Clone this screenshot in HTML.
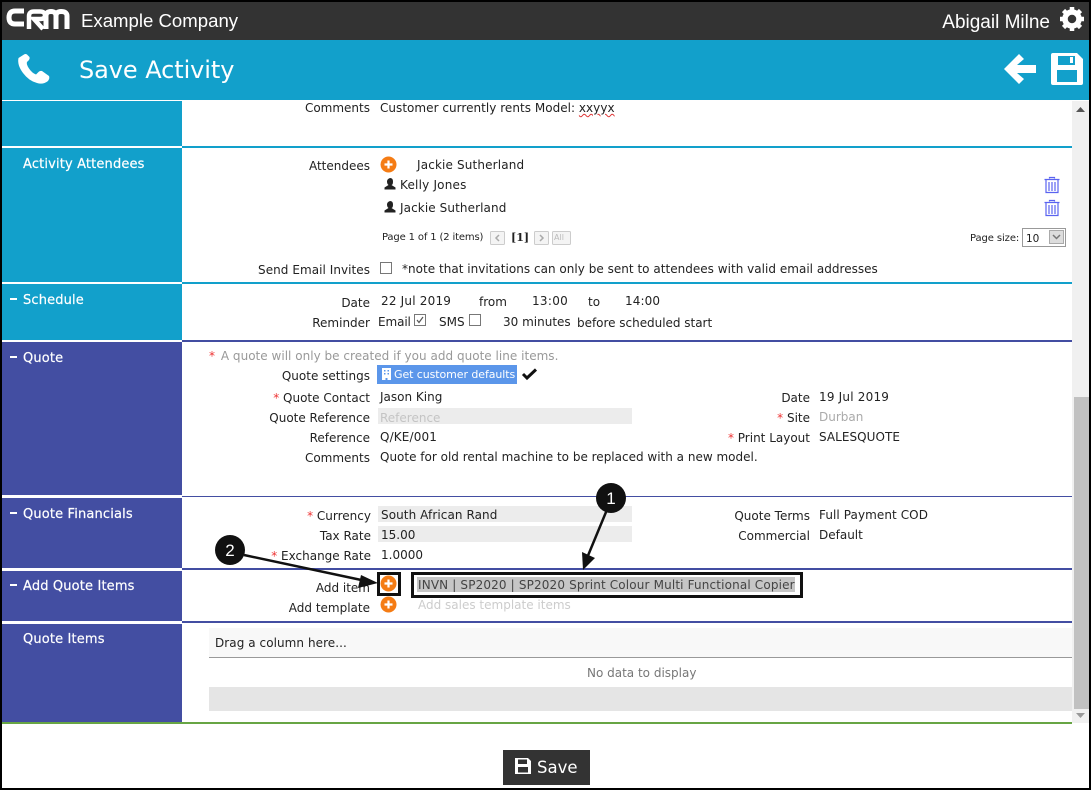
<!DOCTYPE html>
<html><head><meta charset="utf-8"><style>
html,body{margin:0;padding:0;background:#fff}
#p{position:relative;width:1091px;height:790px;overflow:hidden;background:#fff;font-family:"DejaVu Sans",Verdana,sans-serif;font-size:12px;color:#222}
#p div,#p span.a{position:absolute}
.t{position:absolute;line-height:16px;white-space:nowrap;font-size:12px;letter-spacing:0;margin-top:1px}
.r{position:absolute;line-height:16px;white-space:nowrap;text-align:right;font-size:12px;letter-spacing:0;margin-top:1px}
.s{color:#fff;font-size:13px;letter-spacing:.15px;left:23px;-webkit-text-stroke:.2px #fff;margin-top:2px}
.g{background:#ececec;height:16px}
i{font-style:normal;color:#e33}
svg{position:absolute;overflow:visible}
</style></head><body><div id="p">
<div style="left:0;top:2px;width:1091px;height:38px;background:#333"></div>
<div style="left:0;top:40px;width:1091px;height:60px;background:#12a0cb"></div>

<svg style="left:7px;top:8px" width="64" height="24" viewBox="0 0 64 24"><path d="M17 3H8Q2 3 2 9.500Q2 16 8 16H17" fill="none" stroke="#fff" stroke-width="5"/><path d="M22 21V8Q22 3.500 27 3.500H33Q38 3.500 38 7.500Q38 11 33 11H27L36 21" fill="none" stroke="#fff" stroke-width="4.500"/><path d="M39 21V8Q39 3.500 44 3.500Q49 3.500 49 8V21M49 8Q49 3.500 54 3.500Q60 3.500 60 8V21" fill="none" stroke="#fff" stroke-width="5"/></svg>
<span class="t" style="left:81px;top:9px;font-family:'Liberation Sans',sans-serif;font-size:18.600px;line-height:22px;color:#fff">Example Company</span>
<span class="t" style="right:41px;top:11px;font-family:'Liberation Sans',sans-serif;font-size:19px;line-height:22px;color:#fff">Abigail Milne</span>
<svg style="left:1059px;top:6px" width="26" height="26" viewBox="0 0 26 26"><circle cx="13" cy="13" r="7" fill="none" stroke="#fff" stroke-width="5.500"/><g stroke="#fff" stroke-width="4.500"><path d="M13 1V6M13 20V25M1 13H6M20 13H25M4.500 4.500L8 8M18 18L21.500 21.500M21.500 4.500L18 8M8 18L4.500 21.500"/></g></svg>

<svg style="left:17px;top:53px" width="33" height="32" viewBox="0 0 33 32"><path d="M7 1.500L1.500 5Q0 12 6 20T20 30Q26 32 31 28Q33 25 32 23L25 18Q23 17.500 21.500 19L19 21.500Q15 20 12 15.500T10 9L12 7Q13 5.500 12.500 4L10 1.500Q8.500 .5 7 1.500Z" fill="#fff"/></svg>
<span class="t" style="left:79px;top:54px;font-size:24px;line-height:30px;color:#fff;letter-spacing:-.07px">Save Activity</span>
<svg style="left:1003px;top:53px" width="33" height="32" viewBox="0 0 33 32"><path d="M1 16L16 1L21 6L14 12H33V20H14L21 26L16 31Z" fill="#fff"/></svg>
<svg style="left:1051px;top:53px" width="32" height="32" viewBox="0 0 32 32"><path fill-rule="evenodd" d="M2 0H26L32 6V30Q32 32 30 32H2Q0 32 0 30V2Q0 0 2 0ZM7 3V12H24V3ZM19 4H22V10H19ZM6 17V29H26V17Z" fill="#fff"/></svg>

<!-- sidebars -->
<div style="left:2px;top:101px;width:180px;height:45px;background:#12a0cb"></div>
<div style="left:2px;top:148px;width:180px;height:134px;background:#12a0cb"></div>
<div style="left:2px;top:284px;width:180px;height:56px;background:#12a0cb"></div>
<div style="left:2px;top:342px;width:180px;height:153px;background:#434ea2"></div>
<div style="left:2px;top:498px;width:180px;height:70px;background:#434ea2"></div>
<div style="left:2px;top:571px;width:180px;height:50px;background:#434ea2"></div>
<div style="left:2px;top:624px;width:180px;height:98px;background:#434ea2"></div>
<!-- rule lines -->
<div style="left:182px;top:146px;width:890px;height:2px;background:#12a0cb"></div>
<div style="left:182px;top:282px;width:890px;height:2px;background:#12a0cb"></div>
<div style="left:182px;top:340px;width:890px;height:2px;background:#434ea2"></div>
<div style="left:182px;top:496px;width:890px;height:1px;background:#434ea2"></div>
<div style="left:182px;top:568px;width:890px;height:2px;background:#434ea2"></div>
<div style="left:182px;top:621px;width:890px;height:2px;background:#434ea2"></div>
<div style="left:2px;top:722px;width:1070px;height:2px;background:#67a544"></div>

<span class="t s" style="top:155px">Activity Attendees</span>
<span class="t s" style="top:291px">Schedule</span>
<span class="t s" style="top:349px">Quote</span>
<span class="t s" style="top:505px">Quote Financials</span>
<span class="t s" style="top:577px">Add Quote Items</span>
<span class="t s" style="top:630px">Quote Items</span>
<div style="left:10px;top:298px;width:7px;height:2px;background:#fff"></div>
<div style="left:10px;top:356px;width:7px;height:2px;background:#fff"></div>
<div style="left:10px;top:512px;width:7px;height:2px;background:#fff"></div>
<div style="left:10px;top:584px;width:7px;height:2px;background:#fff"></div>

<!-- comments -->
<span class="r" style="right:721px;top:99px">Comments</span>
<span class="t" style="left:380px;top:99px;letter-spacing:.03px">Customer currently rents Model: <span style="text-decoration:underline wavy #d33;text-decoration-thickness:1px">xxyyx</span></span>

<!-- attendees -->
<span class="r" style="right:721px;top:157px">Attendees</span>
<svg style="left:380px;top:156px" width="17" height="17"><circle cx="8.500" cy="8.500" r="8" fill="#f57c14"/><path d="M8.500 4.500V12.500M4.500 8.500H12.500" stroke="#fff" stroke-width="2.200"/></svg>
<span class="t" style="left:417px;top:156px;letter-spacing:.15px">Jackie Sutherland</span>
<svg style="left:384px;top:178px" width="12" height="12" viewBox="0 0 12 12"><path d="M6 0Q9 0 9 3.500T7.500 7L11.500 9.500V11.500H.5V9.500L4.500 7Q3 6 3 3.500T6 0Z" fill="#222"/></svg>
<span class="t" style="left:400px;top:176px;letter-spacing:.2px">Kelly Jones</span>
<svg style="left:384px;top:201px" width="12" height="12" viewBox="0 0 12 12"><path d="M6 0Q9 0 9 3.500T7.500 7L11.500 9.500V11.500H.5V9.500L4.500 7Q3 6 3 3.500T6 0Z" fill="#222"/></svg>
<span class="t" style="left:400px;top:199px;letter-spacing:.1px">Jackie Sutherland</span>
<svg style="left:1044px;top:177px" width="16" height="16" viewBox="0 0 16 16"><path d="M.5 2.500H15.500M5.500 1.500V.5H10.500V1.500M2 3V15.500H14V3M5 5V14M8 5V14M11 5V14" fill="none" stroke="#5a63f0" stroke-width="1.200"/></svg>
<svg style="left:1044px;top:200px" width="16" height="16" viewBox="0 0 16 16"><path d="M.5 2.500H15.500M5.500 1.500V.5H10.500V1.500M2 3V15.500H14V3M5 5V14M8 5V14M11 5V14" fill="none" stroke="#5a63f0" stroke-width="1.200"/></svg>

<span class="t" style="left:382px;top:229px;font-size:10px;letter-spacing:-.15px">Page 1 of 1 (2 items)</span>
<svg style="left:490px;top:231px" width="82" height="14"><g fill="#f4f4f4" stroke="#ccc"><rect x=".5" y=".5" width="14" height="13" rx="1"/><rect x="44.500" y=".5" width="14" height="13" rx="1"/><rect x="62.500" y=".5" width="18" height="13" rx="1"/></g><path d="M9 4L6 7L9 10M50 4L53 7L50 10" fill="none" stroke="#aaa" stroke-width="1.500"/></svg>
<span class="t" style="left:511px;top:229px;font-weight:bold;font-size:11px;font-family:'DejaVu Serif','Liberation Serif',serif">[1]</span>
<span class="t" style="left:554px;top:230px;font-size:8px;line-height:13px;color:#bbb">All</span>
<span class="t" style="left:970px;top:230px;font-size:10px;letter-spacing:-.1px">Page size:</span>
<div style="left:1022px;top:228px;width:42px;height:17px;border:1px solid #999;box-sizing:content-box"></div>
<span class="t" style="left:1026px;top:230px;font-size:10.500px">10</span>
<div style="left:1049px;top:230px;width:15px;height:14px;background:#ddd;border:1px solid #aaa;box-sizing:border-box"></div>
<svg style="left:1052px;top:234px" width="9" height="6"><path d="M1 1L4.500 4.500L8 1" fill="none" stroke="#777" stroke-width="1.500"/></svg>

<span class="r" style="right:721px;top:261px;letter-spacing:.05px">Send Email Invites</span>
<div style="left:380px;top:262px;width:12px;height:12px;border:1px solid #777;box-sizing:border-box"></div>
<span class="t" style="left:402px;top:260px;letter-spacing:.02px">*note that invitations can only be sent to attendees with valid email addresses</span>

<!-- schedule -->
<span class="r" style="right:721px;top:294px">Date</span>
<span class="t" style="left:381px;top:292px;letter-spacing:.2px">22 Jul 2019</span>
<span class="t" style="left:479px;top:293px">from</span>
<span class="t" style="left:532px;top:292px;letter-spacing:.3px">13:00</span>
<span class="t" style="left:588px;top:293px">to</span>
<span class="t" style="left:625px;top:292px;letter-spacing:.1px">14:00</span>
<span class="r" style="right:721px;top:314px">Reminder</span>
<span class="t" style="left:378px;top:313px;letter-spacing:-.1px">Email</span>
<div style="left:414px;top:314px;width:12px;height:12px;border:1px solid #777;box-sizing:border-box"></div>
<svg style="left:416px;top:316px" width="8" height="8"><path d="M1 4L3 6.500L7 1" fill="none" stroke="#555" stroke-width="1.200"/></svg>
<span class="t" style="left:439px;top:313px">SMS</span>
<div style="left:469px;top:314px;width:12px;height:12px;border:1px solid #777;box-sizing:border-box"></div>
<span class="t" style="left:503px;top:313px">30 minutes</span>
<span class="t" style="left:577px;top:314px;letter-spacing:-.02px">before scheduled start</span>

<!-- quote -->
<span class="t" style="left:209px;top:347px;color:#999;letter-spacing:.02px"><i style="margin-right:2px">*</i> A quote will only be created if you add quote line items.</span>
<span class="r" style="right:721px;top:367px">Quote settings</span>
<div style="left:377px;top:365px;width:140px;height:19px;background:#5b96ea"></div>
<svg style="left:382px;top:368px" width="9" height="12" viewBox="0 0 9 12"><path fill-rule="evenodd" d="M0 0H9V12H5.500V10H3.500V12H0ZM2 2V3.500H3.500V2ZM5.500 2V3.500H7V2ZM2 5V6.500H3.500V5ZM5.500 5V6.500H7V5Z" fill="#fff"/></svg>
<span class="t" style="left:394px;top:366px;color:#fff;font-size:11px;letter-spacing:-.08px">Get customer defaults</span>
<svg style="left:522px;top:368px" width="15" height="12"><path d="M1 6L5 10L14 1.500" fill="none" stroke="#111" stroke-width="3"/></svg>

<span class="r" style="right:721px;top:389px"><i>*</i> Quote Contact</span>
<span class="t" style="left:380px;top:388px">Jason King</span>
<span class="r" style="right:721px;top:409px">Quote Reference</span>
<div class="g" style="left:378px;top:408px;width:254px"></div>
<span class="t" style="left:380px;top:409px;color:#c4c4c4">Reference</span>
<span class="r" style="right:721px;top:429px">Reference</span>
<span class="t" style="left:380px;top:428px;letter-spacing:.15px">Q/KE/001</span>
<span class="r" style="right:721px;top:449px">Comments</span>
<span class="t" style="left:380px;top:448px">Quote for old rental machine to be replaced with a new model.</span>

<span class="r" style="right:281px;top:389px">Date</span>
<span class="t" style="left:819px;top:388px;letter-spacing:.2px">19 Jul 2019</span>
<span class="r" style="right:281px;top:409px"><i>*</i> Site</span>
<span class="t" style="left:819px;top:408px;color:#aaa">Durban</span>
<span class="r" style="right:281px;top:429px"><i>*</i> Print Layout</span>
<span class="t" style="left:819px;top:428px;letter-spacing:.05px">SALESQUOTE</span>

<!-- financials -->
<span class="r" style="right:720px;top:507px"><i>*</i> Currency</span>
<div class="g" style="left:378px;top:506px;width:254px"></div>
<span class="t" style="left:381px;top:506px;letter-spacing:.08px">South African Rand</span>
<span class="r" style="right:720px;top:527px">Tax Rate</span>
<div class="g" style="left:378px;top:526px;width:254px"></div>
<span class="t" style="left:381px;top:526px">15.00</span>
<span class="r" style="right:720px;top:547px"><i>*</i> Exchange Rate</span>
<span class="t" style="left:381px;top:546px">1.0000</span>
<span class="r" style="right:281px;top:507px">Quote Terms</span>
<span class="t" style="left:819px;top:506px;letter-spacing:.08px">Full Payment COD</span>
<span class="r" style="right:281px;top:527px">Commercial</span>
<span class="t" style="left:819px;top:526px">Default</span>

<!-- add items -->
<span class="r" style="right:721px;top:579px">Add item</span>
<span class="r" style="right:721px;top:599px">Add template</span>
<svg style="left:380px;top:575px" width="17" height="17"><circle cx="8.500" cy="8.500" r="8" fill="#f57c14"/><path d="M8.500 4.500V12.500M4.500 8.500H12.500" stroke="#fff" stroke-width="2.200"/></svg>
<svg style="left:380px;top:596px" width="17" height="17"><circle cx="8.500" cy="8.500" r="8" fill="#f57c14"/><path d="M8.500 4.500V12.500M4.500 8.500H12.500" stroke="#fff" stroke-width="2.200"/></svg>
<div style="left:377px;top:572px;width:24px;height:24px;border:3px solid #111;box-sizing:border-box"></div>
<div style="left:411px;top:572px;width:392px;height:26px;border:3px solid #111;box-sizing:border-box"></div>
<div style="left:417px;top:577px;width:378px;height:15px;background:#c6c6c6"></div>
<span class="t" style="left:418px;top:576px;color:#444;letter-spacing:.15px">INVN | SP2020 | SP2020 Sprint Colour Multi Functional Copier</span>
<span class="t" style="left:418px;top:596px;color:#ccc">Add sales template items</span>

<!-- grid -->
<div style="left:209px;top:628px;width:863px;height:29px;background:#f8f8f8"></div>
<div style="left:209px;top:657px;width:863px;height:1px;background:#999"></div>
<span class="t" style="left:215px;top:634px;letter-spacing:.06px">Drag a column here...</span>
<span class="t" style="left:587px;top:664px;color:#777">No data to display</span>
<div style="left:209px;top:687px;width:863px;height:24px;background:#e5e5e5"></div>

<!-- scrollbar -->
<div style="left:1072px;top:101px;width:17px;height:622px;background:#f0f0f0"></div>
<div style="left:1074px;top:397px;width:15px;height:312px;background:#c1c1c1"></div>
<svg style="left:1076px;top:107px" width="9" height="5"><path d="M0 5L4.500 0L9 5Z" fill="#555"/></svg>
<svg style="left:1076px;top:713px" width="9" height="5"><path d="M0 0L4.500 5L9 0Z" fill="#999"/></svg>

<!-- save -->
<div style="left:503px;top:750px;width:87px;height:35px;background:#333"></div>
<svg style="left:515px;top:758px" width="16" height="16" viewBox="0 0 16 16"><path fill-rule="evenodd" d="M0 0H13L16 3V16H0ZM3 1.500V6H12V1.500ZM3 9V14.500H13V9Z" fill="#fff"/></svg>
<span class="t" style="left:537px;top:757px;font-size:16.500px;line-height:20px;color:#fff">Save</span>

<!-- callouts -->
<svg style="left:0;top:0" width="1091" height="790">
<path d="M244 555L366 581" stroke="#111" stroke-width="2.500"/><path d="M378 583L358 588L361 575Z" fill="#111"/>
<path d="M611 500L587 558" stroke="#111" stroke-width="2.500"/><path d="M583 570L582 552L595 558Z" fill="#111"/>
<circle cx="611" cy="498" r="15" fill="#111"/><circle cx="230" cy="550" r="15" fill="#111"/>
<text x="611" y="504" font-family="Liberation Sans,sans-serif" font-size="17" fill="#fff" text-anchor="middle">1</text>
<text x="230" y="556" font-family="Liberation Sans,sans-serif" font-size="17" fill="#fff" text-anchor="middle">2</text>
</svg>

<!-- window border -->
<div style="left:0;top:0;width:1091px;height:2px;background:#000"></div>
<div style="left:0;top:0;width:2px;height:790px;background:#000"></div>
<div style="left:1089px;top:0;width:2px;height:790px;background:#000"></div>
<div style="left:0;top:788px;width:1091px;height:2px;background:#000"></div>
</div></body></html>
